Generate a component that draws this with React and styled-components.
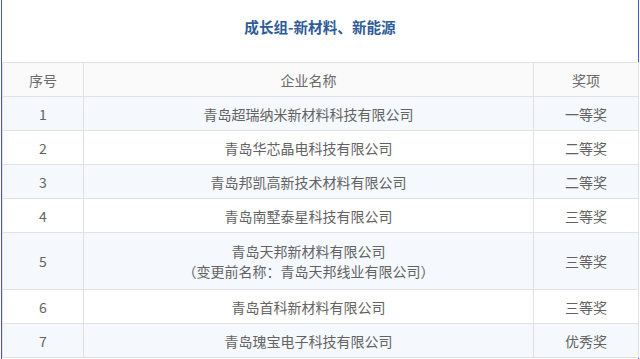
import React from "react";
import styled, { createGlobalStyle } from "styled-components";

const Global = createGlobalStyle`
  html, body { margin: 0; padding: 0; background: #ffffff; }
  body { font-family: "Noto Sans CJK SC", "Noto Sans", sans-serif; }
`;

const Frame = styled.div`
  margin: 0 1px;
  min-height: 100vh;
  box-sizing: border-box;
  border-left: 1px solid #4656d6;
  border-right: 1px solid #4656d6;
  background: #ffffff;
`;

const Title = styled.h2`
  margin: 0;
  padding: 17px 0 25px;
  height: 62px;
  box-sizing: border-box;
  text-align: center;
  font-size: 14.6px;
  line-height: 20px;
  font-weight: 700;
  color: #2f5b98;
`;

const Table = styled.table`
  width: 636px;
  border-collapse: collapse;
  table-layout: fixed;
  font-size: 14px;
  color: #636363;
`;

const HeadCell = styled.th`
  height: 33px;
  padding: 0 8px;
  font-weight: 400;
  line-height: 20px;
  color: #6a6a6a;
  background: #fafafa;
  border: 1px solid #e1e1e1;
  text-align: center;
`;

const Row = styled.tr`
  background: ${(p) => (p.$shaded ? "#f5f8fd" : "#ffffff")};
`;

const Cell = styled.td`
  height: 33px;
  padding: ${(p) => (p.$tall ? "8px" : "0 8px")};
  line-height: 20px;
  border: 1px solid #e1e1e1;
  text-align: center;
  vertical-align: middle;
`;

const rows = [
  { no: "1", name: ["青岛超瑞纳米新材料科技有限公司"], prize: "一等奖" },
  { no: "2", name: ["青岛华芯晶电科技有限公司"], prize: "二等奖" },
  { no: "3", name: ["青岛邦凯高新技术材料有限公司"], prize: "二等奖" },
  { no: "4", name: ["青岛南墅泰星科技有限公司"], prize: "三等奖" },
  {
    no: "5",
    name: ["青岛天邦新材料有限公司", "（变更前名称：青岛天邦线业有限公司）"],
    prize: "三等奖",
  },
  { no: "6", name: ["青岛首科新材料有限公司"], prize: "三等奖" },
  { no: "7", name: ["青岛瑰宝电子科技有限公司"], prize: "优秀奖" },
];

export default function App() {
  return (
    <>
      <Global />
      <Frame>
        <Title>成长组-新材料、新能源</Title>
        <Table>
          <colgroup>
            <col style={{ width: "81px" }} />
            <col style={{ width: "450px" }} />
            <col style={{ width: "105px" }} />
          </colgroup>
          <thead>
            <tr>
              <HeadCell>序号</HeadCell>
              <HeadCell>企业名称</HeadCell>
              <HeadCell>奖项</HeadCell>
            </tr>
          </thead>
          <tbody>
            {rows.map((r, i) => {
              const tall = r.name.length > 1;
              return (
                <Row key={r.no} $shaded={i % 2 === 0}>
                  <Cell $tall={tall}>{r.no}</Cell>
                  <Cell $tall={tall}>
                    {r.name.map((n, j) => (
                      <React.Fragment key={j}>
                        {j > 0 && <br />}
                        {n}
                      </React.Fragment>
                    ))}
                  </Cell>
                  <Cell $tall={tall}>{r.prize}</Cell>
                </Row>
              );
            })}
          </tbody>
        </Table>
      </Frame>
    </>
  );
}
